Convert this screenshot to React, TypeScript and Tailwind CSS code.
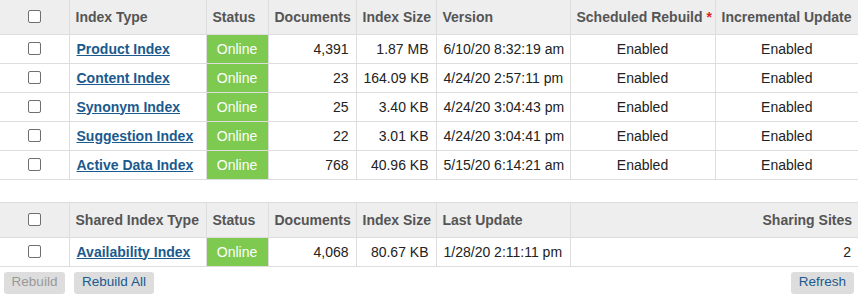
import React from "react";

type Row = {
  name: string;
  docs: string;
  size: string;
  date: string;
};

const rows: Row[] = [
  { name: "Product Index", docs: "4,391", size: "1.87 MB", date: "6/10/20 8:32:19 am" },
  { name: "Content Index", docs: "23", size: "164.09 KB", date: "4/24/20 2:57:11 pm" },
  { name: "Synonym Index", docs: "25", size: "3.40 KB", date: "4/24/20 3:04:43 pm" },
  { name: "Suggestion Index", docs: "22", size: "3.01 KB", date: "4/24/20 3:04:41 pm" },
  { name: "Active Data Index", docs: "768", size: "40.96 KB", date: "5/15/20 6:14:21 am" },
];

function Check() {
  return (
    <input
      type="checkbox"
      className="appearance-none w-[13px] h-[13px] border border-[#6f6f6f] rounded-[2px] bg-white align-middle block mx-auto"
    />
  );
}

const th =
  "border border-[#dddddd] px-[6px] font-bold text-[#555555] text-left leading-[16px] whitespace-nowrap";
const td = "border border-[#dddddd] px-[7px] h-[29px] leading-[16px] whitespace-nowrap";
const btn = "h-[22px] rounded-[3px] bg-[#dddddd] text-center text-[13.5px]";

export default function App() {
  return (
    <div className="w-[858px] h-[298px] bg-white text-[14px] text-[#222222] font-['Liberation_Sans',Arial,sans-serif] overflow-hidden">
      <table className="w-[858px] table-fixed border-collapse">
        <colgroup>
          <col className="w-[69px]" />
          <col className="w-[137px]" />
          <col className="w-[62px]" />
          <col className="w-[88px]" />
          <col className="w-[80px]" />
          <col className="w-[134px]" />
          <col className="w-[145px]" />
          <col className="w-[143px]" />
        </colgroup>
        <thead>
          <tr className="bg-[#eeeeee] h-[34px]">
            <th className={`${th} border-l-0 border-t-0`}>
              <Check />
            </th>
            <th className={`${th} border-t-0`}>Index Type</th>
            <th className={`${th} border-t-0 text-center`}>Status</th>
            <th className={`${th} border-t-0`}>Documents</th>
            <th className={`${th} border-t-0`}>Index Size</th>
            <th className={`${th} border-t-0`}>Version</th>
            <th className={`${th} border-t-0 text-center`}>
              Scheduled Rebuild <span className="text-[#e22222]">*</span>
            </th>
            <th className={`${th} border-t-0 border-r-0 text-center`}>Incremental Update</th>
          </tr>
        </thead>
        <tbody>
          {rows.map((r) => (
            <tr key={r.name}>
              <td className={`${td} border-l-0`}>
                <Check />
              </td>
              <td className={td}>
                <a href="#" className="font-bold text-[#1a5a8e] underline">
                  {r.name}
                </a>
              </td>
              <td className={`${td} bg-[#7ec94f] text-white text-center`}>Online</td>
              <td className={`${td} text-right`}>{r.docs}</td>
              <td className={`${td} text-right`}>{r.size}</td>
              <td className={td}>{r.date}</td>
              <td className={`${td} text-center`}>Enabled</td>
              <td className={`${td} border-r-0 text-center`}>Enabled</td>
            </tr>
          ))}
        </tbody>
      </table>

      <table className="w-[858px] table-fixed border-collapse mt-[22px]">
        <colgroup>
          <col className="w-[69px]" />
          <col className="w-[137px]" />
          <col className="w-[62px]" />
          <col className="w-[88px]" />
          <col className="w-[80px]" />
          <col className="w-[134px]" />
          <col className="w-[288px]" />
        </colgroup>
        <thead>
          <tr className="bg-[#eeeeee] h-[35px]">
            <th className={`${th} border-l-0`}>
              <Check />
            </th>
            <th className={th}>Shared Index Type</th>
            <th className={`${th} text-center`}>Status</th>
            <th className={th}>Documents</th>
            <th className={th}>Index Size</th>
            <th className={th}>Last Update</th>
            <th className={`${th} border-r-0 text-right`}>Sharing Sites</th>
          </tr>
        </thead>
        <tbody>
          <tr>
            <td className={`${td} border-l-0`}>
              <Check />
            </td>
            <td className={td}>
              <a href="#" className="font-bold text-[#1a5a8e] underline">
                Availability Index
              </a>
            </td>
            <td className={`${td} bg-[#7ec94f] text-white text-center`}>Online</td>
            <td className={`${td} text-right`}>4,068</td>
            <td className={`${td} text-right`}>80.67 KB</td>
            <td className={td}>1/28/20 2:11:11 pm</td>
            <td className={`${td} border-r-0 text-right`}>2</td>
          </tr>
        </tbody>
      </table>

      <div className="flex items-center mt-[5px] px-[4px]">
        <div className="flex gap-[9px]">
          <button className={`${btn} w-[61px] text-[#999999]`}>Rebuild</button>
          <button className={`${btn} w-[80px] text-[#1a5a8e]`}>Rebuild All</button>
        </div>
        <button className={`${btn} ml-auto w-[63px] text-[#1a5a8e]`}>Refresh</button>
      </div>
    </div>
  );
}
